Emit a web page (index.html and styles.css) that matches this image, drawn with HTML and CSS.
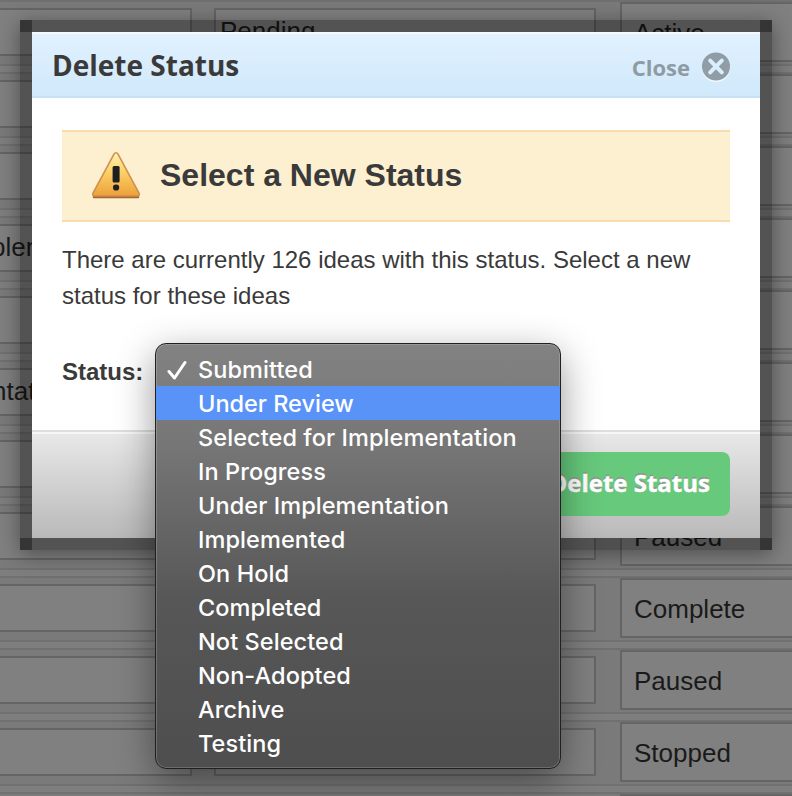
FILE: index.html
```
<!DOCTYPE html>
<html lang="en">
<head>
<meta charset="utf-8">
<title>Delete Status</title>
<link rel="stylesheet" href="styles.css">
</head>
<body>
<div class="page">
  <div class="row"><div class="field"></div><div class="field">Pending</div><div class="select">Active</div></div>
  <div class="row"><div class="field"></div><div class="field"></div><div class="select"></div></div>
  <div class="row"><div class="field"></div><div class="field"></div><div class="select"></div></div>
  <div class="row"><div class="field cut-a">plem</div><div class="field"></div><div class="select"></div></div>
  <div class="row"><div class="field"></div><div class="field"></div><div class="select"></div></div>
  <div class="row"><div class="field cut-b">ntat</div><div class="field"></div><div class="select"></div></div>
  <div class="row"><div class="field"></div><div class="field"></div><div class="select"></div></div>
  <div class="row"><div class="field"></div><div class="field"></div><div class="select">Paused</div></div>
  <div class="row"><div class="field"></div><div class="field"></div><div class="select">Complete</div></div>
  <div class="row"><div class="field"></div><div class="field"></div><div class="select">Paused</div></div>
  <div class="row"><div class="field"></div><div class="field"></div><div class="select">Stopped</div></div>
  <div class="row last"><div class="select"></div></div>
</div>

<div class="frame">
  <div class="dialog">
    <header class="head">
      <h1>Delete Status</h1>
      <a class="close"><span>Close</span>
        <svg width="30" height="30" viewBox="0 0 30 30"><circle cx="15" cy="16" r="14" fill="#f4fafe"/><circle cx="15" cy="14.5" r="14" fill="#919da6"/><path d="M9.2 8.7l11.6 11.6M20.8 8.7L9.2 20.3" stroke="#dbeefb" stroke-width="4" stroke-linecap="round"/></svg>
      </a>
    </header>
    <div class="body">
      <div class="alert">
        <svg width="50" height="48" viewBox="0 0 50 48">
          <defs><linearGradient id="w" x1="0" y1="0" x2="0" y2="1"><stop offset="0" stop-color="#fff3b8"/><stop offset=".45" stop-color="#fbd066"/><stop offset="1" stop-color="#eda03a"/></linearGradient></defs>
          <path d="M3 46H47" stroke="#a9642c" stroke-width="2.6" stroke-linecap="round"/>
          <path d="M25 1.8Q23.8 1.8 23 3.2L2 42Q1 45 4 45H46Q49 45 48 42L27 3.2Q26.2 1.8 25 1.8Z" fill="url(#w)" stroke="#d0904f" stroke-width="1.6"/>
          <rect x="21.6" y="15" width="7" height="16.5" rx="1.5" fill="#1c2022"/><rect x="22" y="33.5" width="6.2" height="6" rx="2.8" fill="#1c2022"/>
        </svg>
        <h2>Select a New Status</h2>
      </div>
      <p>There are currently 126 ideas with this status. Select a new status for these ideas</p>
      <div class="status">Status:</div>
    </div>
    <footer class="foot"><button>Delete Status</button></footer>
  </div>
</div>

<ul class="menu">
  <li><svg class="check" width="20" height="21" viewBox="0 0 20 21"><path d="M2 11.5L7.5 18L18 2.5" fill="none" stroke="#fff" stroke-width="3" stroke-linecap="round" stroke-linejoin="round"/></svg>Submitted</li>
  <li class="active">Under Review</li>
  <li>Selected for Implementation</li>
  <li>In Progress</li>
  <li>Under Implementation</li>
  <li>Implemented</li>
  <li>On Hold</li>
  <li>Completed</li>
  <li>Not Selected</li>
  <li>Non-Adopted</li>
  <li>Archive</li>
  <li>Testing</li>
</ul>
</body>
</html>
```
FILE: styles.css
```
* { box-sizing: border-box; }
body {
  margin: 0;
  position: relative;
  width: 792px;
  height: 796px;
  overflow: hidden;
  background: #7e7e7e;
  font-family: "Liberation Sans", Arial, sans-serif;
}
h1, h2, p, ul { margin: 0; padding: 0; }

.page { display: flex; flex-direction: column; gap: 6px; height: 796px; overflow: hidden; }
.row {
  display: grid;
  grid-template-columns: 192px 382px 1fr;
  flex: none;
  height: 66px;
  border: solid #707070;
  border-width: 2px 0;
  background: #7a7a7a;
}
.field, .select { border: 2px solid #656565; background: #808080; color: #1a1a1a; font-size: 26px; white-space: nowrap; }
.field { height: 48px; margin-top: 6px; line-height: 42px; padding-left: 4px; overflow: hidden; }
.field:first-child { border-left: 0; }
.field:nth-child(2) { margin-left: 22px; width: 382px; }
.select { height: 60px; margin: 0 -2px 0 46px; padding-left: 12px; line-height: 58px; overflow: hidden; }
.cut-a { padding: 0; text-indent: -9px; }
.cut-b { padding: 0; text-indent: -8px; }
.last { height: 4px; border-bottom: 0; }
.last .select { grid-column: 3; height: 2px; border-width: 2px 0 0; }

.frame {
  position: absolute;
  left: 20px;
  top: 20px;
  width: 752px;
  height: 530px;
  padding: 12px;
  background:
    linear-gradient(#353535, #353535) 0 0 / 12px 12px no-repeat,
    linear-gradient(#353535, #353535) 100% 0 / 12px 12px no-repeat,
    linear-gradient(#353535, #353535) 0 100% / 12px 12px no-repeat,
    linear-gradient(#353535, #353535) 100% 100% / 12px 12px no-repeat,
    rgba(0, 0, 0, .35);
  box-shadow: 0 4px 20px rgba(0, 0, 0, .4);
}
.dialog { height: 506px; display: flex; flex-direction: column; background: #fff; color: #3a3a3a; }
.head {
  height: 66px;
  display: flex;
  align-items: center;
  justify-content: space-between;
  padding: 0 29px 0 20px;
  border-top: 2px solid #f5fafe;
  border-bottom: 2px solid #c3e1f8;
  background: linear-gradient(#e1f1fe, #d0e9fb);
  font-family: "Open Sans", "Noto Sans", sans-serif;
}
.head h1 { font-size: 28px; line-height: 38px; font-weight: 700; }
.close { display: flex; align-items: center; gap: 11px; color: #8f9ba4; font-size: 22px; line-height: 30px; font-weight: 700; }
.close span { padding-top: 4px; }
.close svg { margin-top: 3px; }
.body { height: 332px; padding: 32px 30px 0; }
.alert {
  display: flex;
  align-items: center;
  gap: 19px;
  height: 92px;
  padding: 0 0 2px 29px;
  border: solid #fadcaa;
  border-width: 2px 0;
  background: #fdf0d0;
}
.alert h2 { font-size: 32px; line-height: 36px; }
.body p { margin-top: 20px; font-size: 24px; line-height: 36px; }
.status { margin-top: 44px; font-size: 24px; line-height: 28px; font-weight: 700; }
.foot {
  flex: 1;
  display: flex;
  justify-content: flex-end;
  padding: 20px 30px 0;
  border-top: 2px solid #dedede;
  background: linear-gradient(#f7f7f7 0 2px, #e8e8e8 2px, #b9b9b9);
}
.foot button {
  width: 196px;
  height: 64px;
  padding: 0 20px 4px 0;
  border: 0;
  border-radius: 8px;
  background: #67c97c;
  color: #fff;
  text-align: right;
  text-shadow: 0 -2px 0 #8d9990;
  -webkit-text-stroke: .4px #fff;
  font: 700 24px "Open Sans", "Noto Sans", sans-serif;
}

.menu {
  position: absolute;
  left: 155px;
  top: 343px;
  width: 406px;
  height: 426px;
  padding: 8px 0;
  list-style: none;
  border: 1px solid #202020;
  border-radius: 11px;
  background: linear-gradient(#828282 0%, #767676 24%, #575757 60%, #4e4e4e 100%);
  box-shadow: inset 0 0 0 1px rgba(255, 255, 255, .18), 0 12px 38px rgba(0, 0, 0, .42);
  color: #fff;
  font: 500 23.5px/34px Inter, sans-serif;
  letter-spacing: .08px;
}
.menu li { position: relative; height: 34px; padding: 1px 0 0 42px; white-space: nowrap; }
.menu .active { background: #5993f8; letter-spacing: 0; }
.check { position: absolute; left: 11px; top: 8px; }
```
